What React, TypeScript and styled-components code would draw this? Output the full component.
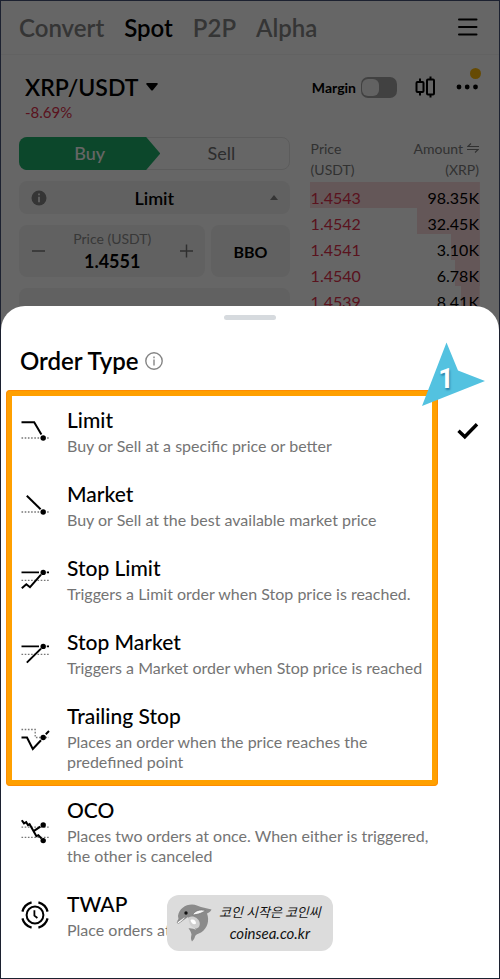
import React, { useState } from "react";
import styled, { createGlobalStyle } from "styled-components";

const GlobalStyle = createGlobalStyle`
  *, *::before, *::after { box-sizing: border-box; }
  body { margin: 0; background: #fff; }
  body, button, input { font-family: Lato, "Noto Sans CJK KR", sans-serif; }
  button { border: 0; padding: 0; background: none; color: inherit; cursor: pointer; }
  svg { display: block; flex: none; }
`;

const Frame = styled.main`
  position: relative;
  display: flex;
  flex-direction: column;
  min-height: 100vh;
  border: 1px solid #1c2130;
  background: #fff;
  color: #000;
`;

/* ---------- Trading screen behind the sheet ---------- */

const Exchange = styled.section`
  position: relative;
  flex: none;
`;

const Dim = styled.div`
  position: absolute;
  inset: 0;
  background: rgba(0, 0, 0, 0.6);
`;

const TopNav = styled.nav`
  display: flex;
  align-items: center;
  justify-content: space-between;
  height: 54px;
  padding: 0 20px 0 18px;
  border-bottom: 1px solid #f4f4f4;
`;

const NavLinks = styled.div`
  display: flex;
  gap: 20px;
`;

const NavLink = styled.a<{ $active?: boolean }>`
  font-size: 24px;
  font-weight: 600;
  line-height: 32px;
  text-decoration: none;
  color: ${(p) => (p.$active ? "#000" : "#848484")};
`;

const PairBar = styled.header`
  display: flex;
  justify-content: space-between;
  align-items: flex-start;
  padding: 17px 20px 0 24px;
`;

const PairButton = styled.button`
  display: flex;
  align-items: center;
  gap: 8px;
  font-size: 23px;
  font-weight: 600;
  line-height: 30px;
`;

const Change = styled.div`
  font-size: 15px;
  line-height: 20px;
  color: #e0304c;
`;

const Tools = styled.div`
  display: flex;
  align-items: center;
  height: 30px;
`;

const MarginLabel = styled.label`
  display: flex;
  align-items: center;
  gap: 5px;
  margin-right: 18px;
  font-size: 14px;
  font-weight: 700;
`;

const Switch = styled.input`
  appearance: none;
  display: flex;
  width: 36px;
  height: 21px;
  margin: 0;
  padding: 2px 1px;
  border-radius: 7px;
  background: #a4a4a4;
  &::before {
    content: "";
    width: 17px;
    height: 17px;
    border-radius: 6px;
    background: #f4f4f4;
  }
  &:checked { justify-content: flex-end; }
`;

const MoreButton = styled.button`
  position: relative;
  margin-left: 20px;
`;

const Notice = styled.span`
  position: absolute;
  top: -16px;
  right: -2px;
  width: 11px;
  height: 11px;
  border-radius: 50%;
  background: #ffba08;
`;

const Columns = styled.div`
  display: grid;
  grid-template-columns: minmax(0, 270fr) minmax(0, 170fr);
  gap: 20px;
  padding: 15px 19px 0 18px;
`;

const OrderForm = styled.form`
  display: flex;
  flex-direction: column;
  gap: 11px;
`;

const SideTabs = styled.div`
  display: grid;
  grid-template-columns: 1fr 1fr;
  height: 33px;
  border: 1px solid #e6e6e6;
  border-radius: 8px;
`;

const SideTab = styled.button<{ $buy?: boolean }>`
  font-size: 18px;
  font-weight: ${(p) => (p.$buy ? 500 : 400)};
  line-height: 31px;
  color: ${(p) => (p.$buy ? "#fff" : "#707070")};
  ${(p) =>
    p.$buy &&
    `
    margin: -1px -6px -1px -1px;
    border-radius: 8px 0 0 8px;
    background: #20b26c;
    clip-path: polygon(0 0, 90% 0, 100% 50%, 90% 100%, 0 100%);
  `}
`;

const Field = styled.div`
  display: flex;
  align-items: center;
  justify-content: space-between;
  height: 52px;
  padding: 0 12px;
  border-radius: 8px;
  background: #f3f3f3;
`;

const TypeField = styled.button`
  display: grid;
  grid-template-columns: 1fr auto 1fr;
  align-items: center;
  height: 33px;
  padding: 0 12px;
  border-radius: 8px;
  background: #f3f3f3;
  font-size: 18px;
  font-weight: 600;
  svg:last-child { justify-self: end; }
`;

const PriceLine = styled.div`
  display: grid;
  grid-template-columns: 186fr 78fr;
  gap: 6px;
`;

const PriceLabel = styled.label`
  display: flex;
  flex-direction: column;
  align-items: center;
  min-width: 0;
  font-size: 14px;
  line-height: 20px;
  color: #8c8c8c;
`;

const PriceInput = styled.input`
  width: 100%;
  height: 24px;
  padding: 0;
  border: 0;
  background: none;
  font-size: 18px;
  font-weight: 700;
  text-align: center;
  color: #000;
`;

const Bbo = styled.button`
  border-radius: 8px;
  background: #f3f3f3;
  font-size: 16px;
  font-weight: 700;
`;

const Book = styled.table`
  width: 100%;
  height: min-content;
  border-collapse: collapse;
  font-size: 16px;
  th {
    height: 45px;
    padding: 0 0 2px 1px;
    font-size: 14px;
    font-weight: 400;
    line-height: 21px;
    text-align: left;
    color: #7c7c7c;
  }
  td {
    height: 26px;
    padding: 5px 0 0 1px;
    line-height: 20px;
    color: #e0304c;
  }
  th:last-child, td:last-child {
    padding-right: 1px;
    text-align: right;
  }
  td:last-child { color: #000; }
`;

const DepthRow = styled.tr<{ $depth: number }>`
  background: linear-gradient(#fbd9dd, #fbd9dd) right / ${(p) => p.$depth}% 100% no-repeat;
`;

const Inline = styled.span`
  display: inline-flex;
  align-items: center;
  gap: 4px;
`;

/* ---------- Order type sheet ---------- */

const Sheet = styled.section`
  position: relative;
  flex: 1;
  margin-top: -34px;
  padding: 9px 19px 36px;
  border-radius: 24px 24px 0 0;
  background: #fff;
`;

const Handle = styled.div`
  width: 52px;
  height: 5px;
  margin: 0 auto;
  border-radius: 3px;
  background: #d6dade;
`;

const SheetTitle = styled.h2`
  display: flex;
  align-items: center;
  gap: 6px;
  margin: 25px 0 29px;
  font-size: 24px;
  font-weight: 600;
  line-height: 32px;
`;

const OptionList = styled.div`
  position: relative;
  display: grid;
  gap: 24px;
  & + & { margin-top: 24px; }
`;

const Highlight = styled.div`
  position: absolute;
  inset: -16px 42px -14px -14px;
  border: 6px solid #ffa000;
  border-radius: 4px;
  outline: 1px solid #ff8c00;
  outline-offset: -1px;
  pointer-events: none;
`;

const Marker = styled.div`
  position: absolute;
  top: -64px;
  right: -6px;
  width: 64px;
  height: 64px;
  pointer-events: none;
`;

const MarkerNumber = styled.span`
  position: absolute;
  inset: 20px 16px auto 0;
  font-family: Roboto, sans-serif;
  font-size: 27px;
  font-weight: 700;
  line-height: 34px;
  text-align: center;
  color: #fff;
  text-shadow: 1px 2px 2px rgba(0, 60, 110, 0.5);
`;

const Option = styled.label`
  display: grid;
  grid-template-columns: 30px minmax(0, 368px) 1fr;
  column-gap: 17px;
  align-items: center;
  cursor: pointer;
`;

const HiddenRadio = styled.input`
  position: absolute;
  opacity: 0;
  pointer-events: none;
`;

const OptionName = styled.div`
  font-size: 21px;
  font-weight: 500;
  line-height: 28px;
`;

const OptionText = styled.div`
  margin-top: 2px;
  font-size: 16px;
  line-height: 20px;
  color: #747474;
`;

const CheckSlot = styled.span`
  display: flex;
  justify-content: flex-end;
`;

const Watermark = styled.a`
  position: absolute;
  bottom: 27px;
  left: 50%;
  display: flex;
  align-items: center;
  gap: 7px;
  width: 166px;
  height: 56px;
  margin-left: -83px;
  padding: 0 9px;
  border-radius: 12px;
  background: #dcdcdc;
  font-size: 15px;
  font-style: italic;
  line-height: 21px;
  text-align: center;
  text-decoration: none;
  white-space: nowrap;
  color: #111;
`;

const Slogan = styled.span`
  display: block;
  font-size: 13px;
`;

/* ---------- Icons ---------- */

const Glyph = ({ children }: { children: React.ReactNode }) => (
  <svg width="30" height="30" viewBox="0 0 30 30" fill="none" stroke="#000" strokeWidth="2">
    {children}
  </svg>
);

const Dots = ({ d }: { d: string }) => (
  <path d={d} stroke="#777" strokeWidth="1.3" strokeDasharray="1.6 1.6" />
);

const Node = ({ x, y }: { x: number; y: number }) => (
  <circle cx={x} cy={y} r="2.7" fill="#000" stroke="none" />
);

const LimitIcon = () => (
  <Glyph>
    <path d="M1.5 6.2H14.2L21.4 18.5" />
    <Dots d="M1.5 22H29" />
    <Node x={23.2} y={22} />
  </Glyph>
);

const MarketIcon = () => (
  <Glyph>
    <path d="M6.8 5.8L20.6 19.2" />
    <Dots d="M1.5 22H29" />
    <Node x={23.2} y={22} />
  </Glyph>
);

const StopLimitIcon = () => (
  <Glyph>
    <path d="M1.5 8.4H19M26.8 8.4H29" strokeWidth="1.7" />
    <Dots d="M1.5 16.4H29" />
    <path d="M1.8 24.2L6.3 20.2L10 23.2L21 10.6" />
    <Node x={23.2} y={8.4} />
  </Glyph>
);

const StopMarketIcon = () => (
  <Glyph>
    <path d="M1.5 8.4H19M26.8 8.4H29" strokeWidth="1.7" />
    <Dots d="M1.5 16.4H29" />
    <path d="M6.8 24.6L21 10.6" />
    <Node x={23.2} y={8.4} />
  </Glyph>
);

const TrailingIcon = () => (
  <Glyph>
    <Dots d="M1.5 7.5H15.2V15.5H29" />
    <path d="M1.5 15.5H7L12.8 27L21 18.2M25.8 12.2L29 9" />
    <Node x={23.2} y={15.5} />
  </Glyph>
);

const OcoIcon = () => (
  <Glyph>
    <Dots d="M1.5 11.2H29" />
    <Dots d="M1.5 21.3H29" />
    <path d="M1.8 4.2L4 7.4L6.2 6.2L8 9.2L9.6 8.2L13.6 15.2L16.4 20.2L18.4 19.2L21.6 22.6" />
    <path d="M13.6 15.2L20.4 10.6" />
    <Node x={23.2} y={9} />
    <Node x={23.2} y={24.6} />
  </Glyph>
);

const TwapIcon = () => (
  <Glyph>
    <circle cx="15" cy="15" r="8.4" />
    <path d="M14.4 10.2V15.6L17.4 18" strokeWidth="1.8" />
    <path
      d="M11.6 2.4A13 13 0 0 0 2.4 11.6M18.4 2.4A13 13 0 0 1 27.6 11.6M2.4 18.4A13 13 0 0 0 11.6 27.6M27.6 18.4A13 13 0 0 1 18.4 27.6"
      strokeWidth="2.2"
    />
  </Glyph>
);

const Dolphin = () => (
  <svg width="36" height="40" viewBox="0 0 36 40">
    <path
      d="M2 13C3 6 9 1.500 16 1.500C20 1.500 22 3 25 4L35.500 6.500C34.500 9 33 9.500 31 10.500C33.500 17 32 25 25 29.500C22 31 19.500 31.500 19 33.500C18.500 35.500 17.500 37 16 38.500C14.500 36 15 34 15.500 31.500C15 29 14 27 12.500 25.500C15 25 18 26 20 27L12 14L5 19L1.500 20C0.500 18.500 2 17 2.500 16Z"
      fill="#8b8b8b"
    />
    <path d="M12.500 14.500C17 12 22 15 23.500 19C24.500 23 22.500 25.500 19.500 25.500C14.500 24 12.500 20 12.500 14.500Z" fill="#cfcfcf" />
    <path d="M14.500 17C18 15.500 20 18 20 20.500C18 22.500 15 20.500 14.500 17Z" fill="#fff" />
    <path d="M1.500 19L9.500 13.200C8.500 16 5.500 18.500 2.500 20.500C1.500 20.500 1 19.800 1.500 19Z" fill="#fff" stroke="#777" strokeWidth="0.600" />
    <path d="M16.500 12C19 7.500 24 6 29.500 7.500C27 9.500 23 11.500 16.500 12Z" fill="#f4f4f4" stroke="#777" strokeWidth="0.800" />
    <circle cx="10" cy="10" r="1.700" fill="#111" />
  </svg>
);

const options = [
  { id: "limit", name: "Limit", text: "Buy or Sell at a specific price or better", Icon: LimitIcon },
  { id: "market", name: "Market", text: "Buy or Sell at the best available market price", Icon: MarketIcon },
  { id: "stop-limit", name: "Stop Limit", text: "Triggers a Limit order when Stop price is reached.", Icon: StopLimitIcon },
  { id: "stop-market", name: "Stop Market", text: "Triggers a Market order when Stop price is reached", Icon: StopMarketIcon },
  { id: "trailing", name: "Trailing Stop", text: "Places an order when the price reaches the predefined point", Icon: TrailingIcon },
  { id: "oco", name: "OCO", text: "Places two orders at once. When either is triggered, the other is canceled", Icon: OcoIcon },
  { id: "twap", name: "TWAP", text: "Place orders at", Icon: TwapIcon },
];

const asks = [
  { price: "1.4543", amount: "98.35K", depth: 100 },
  { price: "1.4542", amount: "32.45K", depth: 37 },
  { price: "1.4541", amount: "3.10K", depth: 17 },
  { price: "1.4540", amount: "6.78K", depth: 15 },
  { price: "1.4539", amount: "8.41K", depth: 11 },
];

export default function App() {
  const [selected, setSelected] = useState("limit");

  const renderOption = ({ id, name, text, Icon }: (typeof options)[number]) => (
    <Option key={id}>
      <Icon />
      <div>
        <HiddenRadio type="radio" name="order-type" checked={selected === id} onChange={() => setSelected(id)} />
        <OptionName>{name}</OptionName>
        <OptionText>{text}</OptionText>
      </div>
      <CheckSlot>
        {selected === id && (
          <svg width="24" height="18" viewBox="0 0 24 18" fill="none" stroke="#000" strokeWidth="3.4">
            <path d="M2.500 8.800L8.800 14.800L21 2.200" />
          </svg>
        )}
      </CheckSlot>
    </Option>
  );

  return (
    <Frame>
      <GlobalStyle />
      <Exchange>
        <TopNav>
          <NavLinks>
            <NavLink href="#convert">Convert</NavLink>
            <NavLink href="#spot" $active>Spot</NavLink>
            <NavLink href="#p2p">P2P</NavLink>
            <NavLink href="#alpha">Alpha</NavLink>
          </NavLinks>
          <button type="button" aria-label="Menu">
            <svg width="22" height="20" viewBox="0 0 22 20" stroke="#000" strokeWidth="2" strokeLinecap="round">
              <path d="M2 1.500H19.500M2 9H19.500M2 16.500H19.500" />
            </svg>
          </button>
        </TopNav>

        <PairBar>
          <div>
            <PairButton type="button">
              XRP/USDT
              <svg width="12" height="8" viewBox="0 0 12 8"><path d="M1 0H11Q12.200 0.500 11.500 1.500L7 7Q6 8 5 7L0.500 1.500Q-0.200 0.500 1 0Z" /></svg>
            </PairButton>
            <Change>-8.69%</Change>
          </div>
          <Tools>
            <MarginLabel>
              Margin
              <Switch type="checkbox" role="switch" />
            </MarginLabel>
            <button type="button" aria-label="Chart">
              <svg width="21" height="22" viewBox="0 0 21 22" fill="none" stroke="#000" strokeWidth="2">
                <rect x="1.500" y="6" width="7" height="10" rx="1" />
                <path d="M5 2.500V6M5 16V19.500M15.500 0.500V3.500M15.500 18.500V21.500" />
                <rect x="12" y="3.500" width="7" height="15" rx="1" />
              </svg>
            </button>
            <MoreButton type="button" aria-label="More">
              <svg width="23" height="6" viewBox="0 0 23 6">
                <circle cx="3" cy="3" r="2.400" /><circle cx="11.200" cy="3" r="2.400" /><circle cx="19.500" cy="3" r="2.400" />
              </svg>
              <Notice />
            </MoreButton>
          </Tools>
        </PairBar>

        <Columns>
          <OrderForm>
            <SideTabs>
              <SideTab type="button" $buy>Buy</SideTab>
              <SideTab type="button">Sell</SideTab>
            </SideTabs>
            <TypeField type="button">
              <svg width="16" height="16" viewBox="0 0 16 16">
                <circle cx="8" cy="8" r="7.500" fill="#848484" />
                <path d="M8 3.500V5.300M8 6.800V12.200" stroke="#f3f3f3" strokeWidth="1.800" />
              </svg>
              Limit
              <svg width="8" height="5" viewBox="0 0 8 5"><path d="M4 0L8 5H0Z" fill="#848484" /></svg>
            </TypeField>
            <PriceLine>
              <Field>
                <button type="button" aria-label="Decrease price">
                  <svg width="14" height="14" stroke="#777" strokeWidth="1.500"><path d="M1 7H14" /></svg>
                </button>
                <PriceLabel>
                  Price (USDT)
                  <PriceInput defaultValue="1.4551" inputMode="decimal" />
                </PriceLabel>
                <button type="button" aria-label="Increase price">
                  <svg width="14" height="14" stroke="#777" strokeWidth="1.500"><path d="M1 7H14M7.500 0.500V13.500" /></svg>
                </button>
              </Field>
              <Bbo type="button">BBO</Bbo>
            </PriceLine>
            <Field />
          </OrderForm>

          <Book>
            <thead>
              <tr>
                <th>Price<br />(USDT)</th>
                <th>
                  <Inline>
                    Amount
                    <svg width="12" height="10" viewBox="0 0 12 10" fill="none" stroke="#7c7c7c" strokeWidth="1.200">
                      <path d="M12 3.500H0.800L4 0.500M0 6.500H11.200L8 9.500" />
                    </svg>
                  </Inline>
                  <br />(XRP)
                </th>
              </tr>
            </thead>
            <tbody>
              {asks.map((row) => (
                <DepthRow key={row.price} $depth={row.depth}>
                  <td>{row.price}</td>
                  <td>{row.amount}</td>
                </DepthRow>
              ))}
            </tbody>
          </Book>
        </Columns>
        <Dim />
      </Exchange>

      <Sheet>
        <Handle />
        <SheetTitle>
          Order Type
          <svg width="18" height="18" viewBox="0 0 18 18" fill="none" stroke="#858585" strokeWidth="1.400">
            <circle cx="9" cy="9" r="8.200" />
            <path d="M9 4.500V6.200M9 7.500V13.500" />
          </svg>
        </SheetTitle>
        <OptionList>
          {options.slice(0, 5).map(renderOption)}
          <Highlight />
          <Marker>
            <svg width="64" height="64" viewBox="0 0 64 64">
              <path d="M24.500 0.500L36 28.500L63 39L0 64Z" fill="#53c2e0" />
            </svg>
            <MarkerNumber>1</MarkerNumber>
          </Marker>
        </OptionList>
        <OptionList>{options.slice(5).map(renderOption)}</OptionList>
        <Watermark href="#coinsea">
          <Dolphin />
          <span><Slogan>코인 시작은 코인씨</Slogan>coinsea.co.kr</span>
        </Watermark>
      </Sheet>
    </Frame>
  );
}
